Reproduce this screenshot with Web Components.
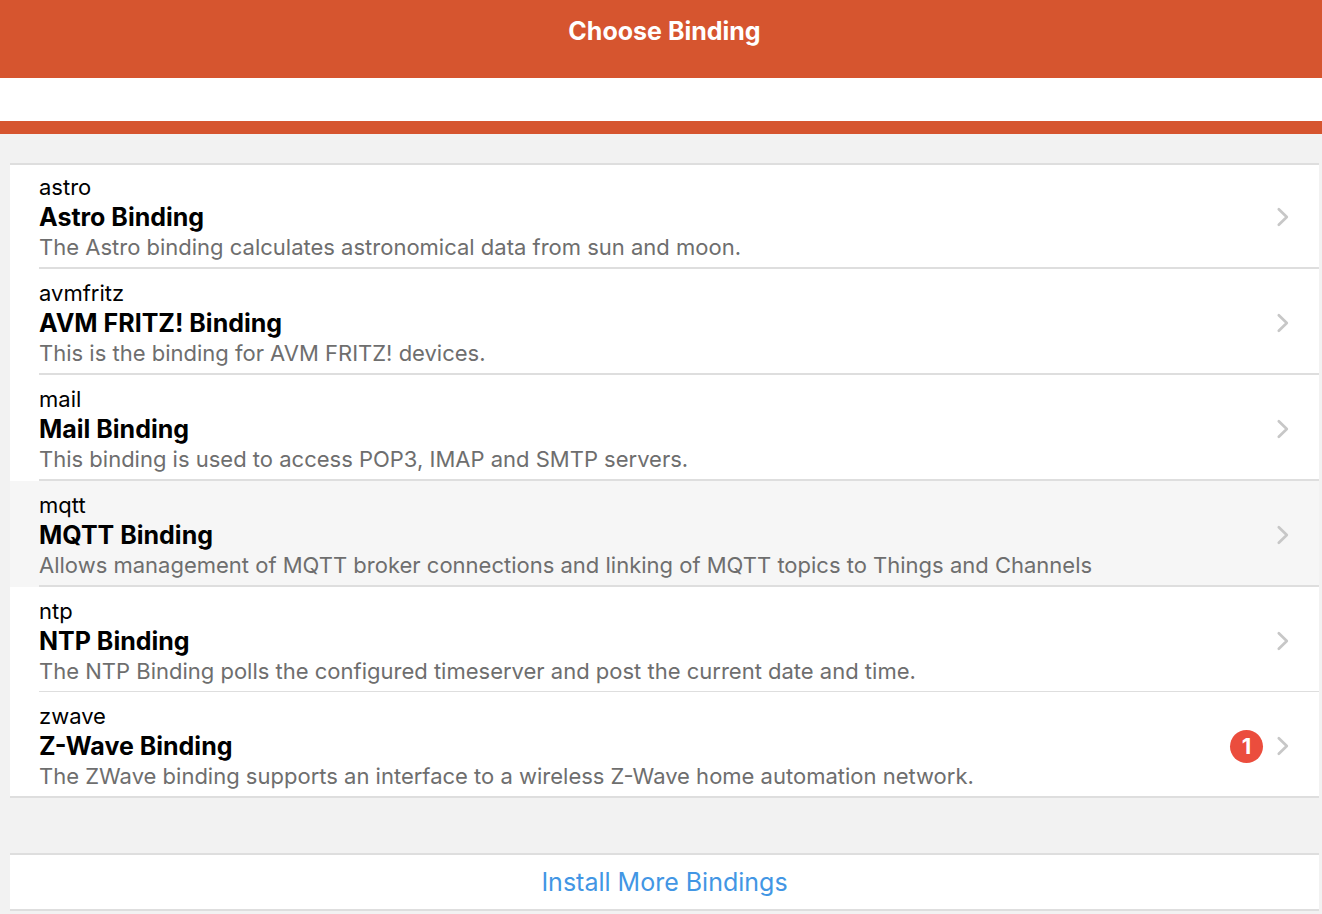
<!DOCTYPE html>
<html lang="en"><head><meta charset="utf-8"><title>Choose Binding</title>
<style>html,body{margin:0;min-height:100%;background:#f2f2f2}body{font-family:Inter,"Liberation Sans",sans-serif;color:#000}</style></head>
<body><binding-page></binding-page>
<script>
class BindingPage extends HTMLElement{
constructor(){super();this.attachShadow({mode:'open'}).innerHTML=`<style>
:host{display:block}
ul{list-style:none;margin:29px 3px 0 10px;padding:0;background:#fff;border-top:2px solid #dedede;border-bottom:2px solid #dedede}
li:first-child{--row-top:7px}
li:nth-last-child(2){--row-line:1px}
li:last-child{--row-line:0px}
install-button{margin:55px 3px 0 10px}
</style><page-header>Choose Binding</page-header><main><ul>
<li><binding-row><span slot="id">astro</span><span slot="name">Astro Binding</span><span slot="text">The Astro binding calculates astronomical data from sun and moon.</span></binding-row></li>
<li><binding-row><span slot="id">avmfritz</span><span slot="name">AVM FRITZ! Binding</span><span slot="text">This is the binding for AVM FRITZ! devices.</span></binding-row></li>
<li><binding-row><span slot="id">mail</span><span slot="name">Mail Binding</span><span slot="text">This binding is used to access POP3, IMAP and SMTP servers.</span></binding-row></li>
<li><binding-row active><span slot="id">mqtt</span><span slot="name">MQTT Binding</span><span slot="text">Allows management of MQTT broker connections and linking of MQTT topics to Things and Channels</span></binding-row></li>
<li><binding-row><span slot="id">ntp</span><span slot="name">NTP Binding</span><span slot="text">The NTP Binding polls the configured timeserver and post the current date and time.</span></binding-row></li>
<li><binding-row><span slot="id">zwave</span><span slot="name">Z-Wave Binding</span><span slot="text">The ZWave binding supports an interface to a wireless Z-Wave home automation network.</span><count-badge slot="after">1</count-badge></binding-row></li>
</ul><install-button>Install More Bindings</install-button></main>`}}
class PageHeader extends HTMLElement{
constructor(){super();this.attachShadow({mode:'open'}).innerHTML=`<style>
:host{display:block}
header{background:#d6552f;color:#fff;padding:15px 3px 31px 10px;text-align:center}
h1{margin:0;font-size:25px;line-height:32px;font-weight:700}
.sub{height:43px;background:#fff;border-bottom:13px solid #d6552f}
</style><header><h1><slot></slot></h1></header><div class="sub"></div>`}}
class BindingRow extends HTMLElement{
constructor(){super();this.attachShadow({mode:'open'}).innerHTML=`<style>
:host{display:block}
a{display:block;padding-left:29px;color:inherit;text-decoration:none}
:host([active]) a{background:#f6f6f6}
.inner{display:flex;align-items:center;gap:13px;padding:var(--row-top,9px) 29px 5px 0;border-bottom:var(--row-line,2px) solid #dedede}
.body{flex:1;min-width:0;line-height:30px}
.id{font-size:22px}
.name{font-size:25px;font-weight:700}
.text{font-size:22px;color:#6e6e6e}
svg{display:block;width:14px;height:20px}
</style><a href="#"><div class="inner"><div class="body"><div class="id"><slot name="id"></slot></div><div class="name"><slot name="name"></slot></div><div class="text"><slot name="text"></slot></div></div><slot name="after"></slot><svg viewBox="0 0 14 20" aria-hidden="true"><path d="M2.8 2.2 10.8 10 2.8 17.8" fill="none" stroke="#c7c7c7" stroke-width="2.7" stroke-linecap="round" stroke-linejoin="round"/></svg></div></a>`}}
class CountBadge extends HTMLElement{
constructor(){super();this.attachShadow({mode:'open'}).innerHTML=`<style>
:host{display:block;width:33px;height:33px;border-radius:50%;background:#eb4d3d;color:#fff;font-size:22px;line-height:33px;font-weight:700;text-align:center}
</style><slot></slot>`}}
class InstallButton extends HTMLElement{
constructor(){super();this.attachShadow({mode:'open'}).innerHTML=`<style>
:host{display:block}
button{display:block;width:100%;margin:0;padding:11px 0;border:0;border-top:2px solid #dedede;border-bottom:2px solid #dedede;background:#fff;color:#4296e4;font:inherit;font-size:25px;line-height:32px;cursor:pointer}
</style><button type="button"><slot></slot></button>`}}
customElements.define('page-header',PageHeader);
customElements.define('count-badge',CountBadge);
customElements.define('binding-row',BindingRow);
customElements.define('install-button',InstallButton);
customElements.define('binding-page',BindingPage);
</script></body></html>
